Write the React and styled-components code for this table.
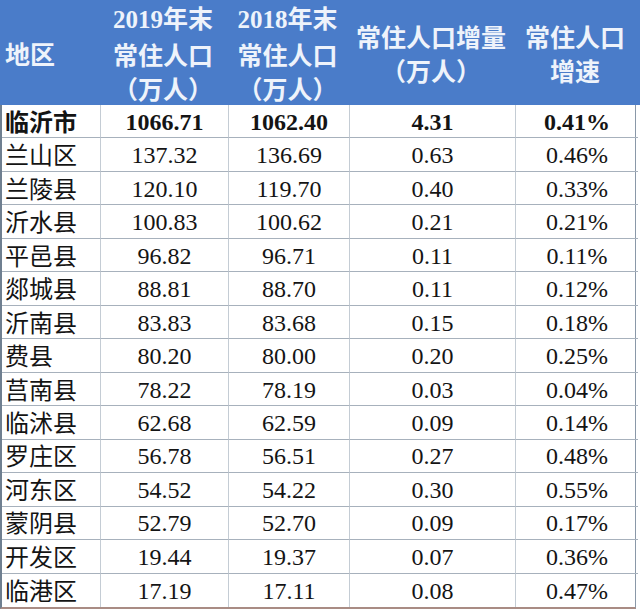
import React from "react";
import styled, { createGlobalStyle } from "styled-components";

const Global = createGlobalStyle`
  html, body {
    margin: 0;
    padding: 0;
    background: #ffffff;
  }
`;

const cols = "99px 128px 121px 166px 122px";

const Table = styled.div`
  width: 640px;
  height: 609px;
  display: flex;
  flex-direction: column;
  overflow: hidden;
  background: #ffffff;
`;

const Head = styled.div`
  display: grid;
  grid-template-columns: ${cols} 4px;
  height: 105px;
  flex: none;
  background: #4a7cc9;
`;

const HeadCell = styled.div`
  display: flex;
  flex-direction: column;
  justify-content: center;
  align-items: ${(p) => (p.left ? "flex-start" : "center")};
  padding-left: ${(p) => (p.left ? "5px" : "0")};
  color: #eef3fb;
  font-family: "Noto Sans CJK SC", "Noto Sans", sans-serif;
  font-weight: 700;
  font-size: 25px;
  line-height: 34px;
  white-space: nowrap;
`;

const Num = styled.span`
  font-family: "Liberation Serif", serif;
  font-weight: 700;
`;

const Body = styled.div`
  height: 504px;
  flex: none;
  display: grid;
  grid-template-columns: ${cols};
  grid-template-rows: repeat(15, minmax(0, 1fr));
  border-left: 2px solid #6f7f90;
  border-right: 1px solid #8a98a8;
  border-bottom: 2px solid #a98c84;
  width: 636px;
  box-sizing: border-box;
`;

const Cell = styled.div`
  display: flex;
  align-items: center;
  justify-content: ${(p) => (p.left ? "flex-start" : "center")};
  padding-left: ${(p) => (p.left ? "3px" : "0")};
  padding-top: ${(p) => (p.left ? "0" : "2px")};
  box-sizing: border-box;
  min-height: 0;
  border-bottom: 1px solid #a7b1bc;
  border-right: ${(p) => (p.last ? "none" : "1px solid #c4ccd4")};
  color: #141414;
  font-family: ${(p) =>
    p.left
      ? `"Noto Sans CJK SC", "Noto Sans", sans-serif`
      : `"Liberation Serif", serif`};
  font-weight: ${(p) => (p.bold ? 700 : 400)};
  font-size: 24px;
  line-height: 1.2;
  white-space: nowrap;
  &:nth-last-child(-n + 5) {
    border-bottom: none;
  }
`;

const rows = [
  ["临沂市", "1066.71", "1062.40", "4.31", "0.41%"],
  ["兰山区", "137.32", "136.69", "0.63", "0.46%"],
  ["兰陵县", "120.10", "119.70", "0.40", "0.33%"],
  ["沂水县", "100.83", "100.62", "0.21", "0.21%"],
  ["平邑县", "96.82", "96.71", "0.11", "0.11%"],
  ["郯城县", "88.81", "88.70", "0.11", "0.12%"],
  ["沂南县", "83.83", "83.68", "0.15", "0.18%"],
  ["费县", "80.20", "80.00", "0.20", "0.25%"],
  ["莒南县", "78.22", "78.19", "0.03", "0.04%"],
  ["临沭县", "62.68", "62.59", "0.09", "0.14%"],
  ["罗庄区", "56.78", "56.51", "0.27", "0.48%"],
  ["河东区", "54.52", "54.22", "0.30", "0.55%"],
  ["蒙阴县", "52.79", "52.70", "0.09", "0.17%"],
  ["开发区", "19.44", "19.37", "0.07", "0.36%"],
  ["临港区", "17.19", "17.11", "0.08", "0.47%"],
];

export default function App() {
  return (
    <>
      <Global />
      <Table>
        <Head>
          <HeadCell left>地区</HeadCell>
          <HeadCell>
            <div>
              <Num>2019</Num>年末
            </div>
            <div>常住人口</div>
            <div>（万人）</div>
          </HeadCell>
          <HeadCell>
            <div>
              <Num>2018</Num>年末
            </div>
            <div>常住人口</div>
            <div>（万人）</div>
          </HeadCell>
          <HeadCell>
            <div>常住人口增量</div>
            <div>（万人）</div>
          </HeadCell>
          <HeadCell>
            <div>常住人口</div>
            <div>增速</div>
          </HeadCell>
          <div />
        </Head>
        <Body>
          {rows.map((r, i) =>
            r.map((v, j) => (
              <Cell
                key={i + "-" + j}
                left={j === 0}
                last={j === 4}
                bold={i === 0}
              >
                {v}
              </Cell>
            ))
          )}
        </Body>
      </Table>
    </>
  );
}
